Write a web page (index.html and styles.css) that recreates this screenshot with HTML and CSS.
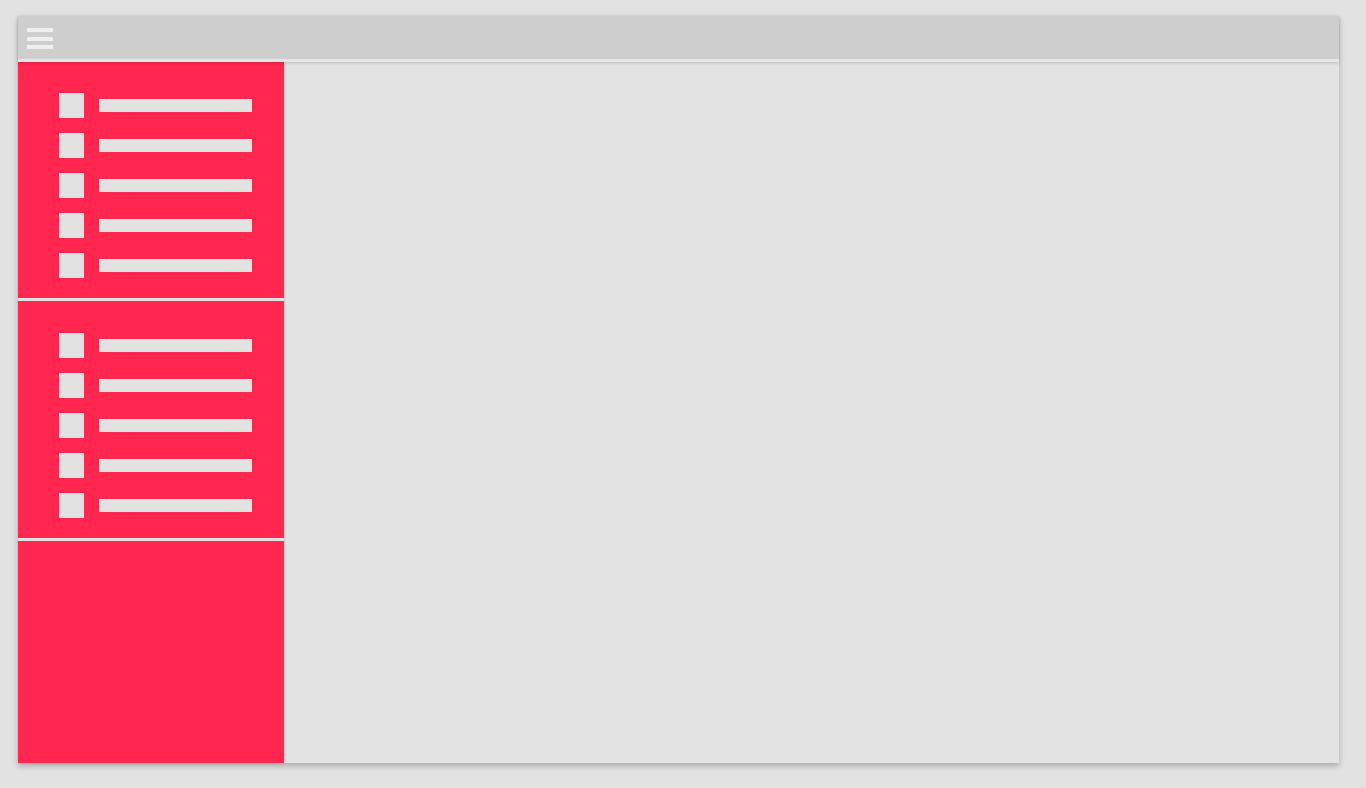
FILE: index.html
```html
<!DOCTYPE html>
<html>
<head>
<meta charset="utf-8">
<link rel="stylesheet" href="styles.css">
</head>
<body>
<div class="frame">
  <header class="topbar">
    <div class="menu-btn"><span></span><span></span><span></span></div>
  </header>
  <div class="body">
    <nav class="sidebar">
      <div class="section first">
        <div class="item"><i class="ico"></i><b class="label"></b></div>
        <div class="item"><i class="ico"></i><b class="label"></b></div>
        <div class="item"><i class="ico"></i><b class="label"></b></div>
        <div class="item"><i class="ico"></i><b class="label"></b></div>
        <div class="item"><i class="ico"></i><b class="label"></b></div>
      </div>
      <div class="section second">
        <div class="item"><i class="ico"></i><b class="label"></b></div>
        <div class="item"><i class="ico"></i><b class="label"></b></div>
        <div class="item"><i class="ico"></i><b class="label"></b></div>
        <div class="item"><i class="ico"></i><b class="label"></b></div>
        <div class="item"><i class="ico"></i><b class="label"></b></div>
      </div>
      <div class="section last"></div>
    </nav>
    <main class="content"></main>
  </div>
</div>
</body>
</html>
```
FILE: styles.css
```css
html, body {
  margin: 0;
  padding: 0;
  background: #e2e2e2;
  font-family: "Liberation Sans", Arial, sans-serif;
}
body {
  padding: 16px 0 25px 18px;
}
.frame {
  width: 1321px;
  height: 747px;
  display: flex;
  flex-direction: column;
  background: #e3e3e3;
  box-shadow: 0 3px 6px rgba(0,0,0,0.25);
}
.topbar {
  position: relative;
  z-index: 2;
  height: 43px;
  flex: 0 0 43px;
  background: #cecece;
  border-bottom: 3px solid #e6e6e6;
  box-shadow: 0 1px 3px rgba(0,0,0,0.18);
  display: flex;
  align-items: flex-start;
}
.menu-btn {
  margin: 12px 0 0 9px;
  display: flex;
  flex-direction: column;
  gap: 4.5px;
}
.menu-btn span {
  display: block;
  width: 26px;
  height: 4px;
  background: #efefef;
  box-shadow: 0 0 1px rgba(255,255,255,0.6);
}
.body {
  flex: 1;
  display: flex;
  min-height: 0;
}
.sidebar {
  width: 266px;
  flex: 0 0 266px;
  display: flex;
  flex-direction: column;
  gap: 3px;
  background: #e2e2e2;
  box-shadow: 1px 0 2px rgba(0,0,0,0.12);
  position: relative;
  z-index: 1;
}
.section {
  background: #ff2650;
  display: flex;
  flex-direction: column;
  gap: 15px;
  padding-left: 41px;
  box-sizing: border-box;
}
.section.first { height: 236px; padding-top: 31px; }
.section.second { height: 237px; padding-top: 32px; }
.section.last { flex: 1; }
.item {
  display: flex;
  align-items: center;
  gap: 15px;
  height: 25px;
}
.ico {
  width: 25px;
  height: 25px;
  background: #e2e2e2;
}
.label {
  width: 153px;
  height: 13px;
  background: #e2e2e2;
}
.content {
  flex: 1;
  background: #e3e3e3;
}
```
